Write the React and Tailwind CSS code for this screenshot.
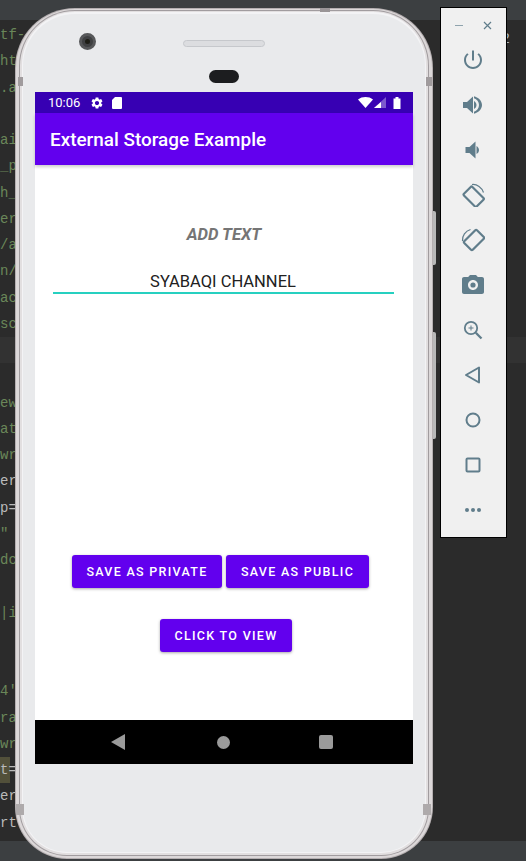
import React from 'react';

const codeRows = [
  ['tf-', 'text-[#6a8759]'], ['ht', 'text-[#6a8759]'], ['.a', 'text-[#6a8759]'], ['', ''],
  ['ai', 'text-[#6a8759]'], ['_p', 'text-[#6a8759]'], ['h_', 'text-[#6a8759]'], ['er', 'text-[#6a8759]'],
  ['/a', 'text-[#6a8759]'], ['n/', 'text-[#6a8759]'], ['ac', 'text-[#6a8759]'], ['sc', 'text-[#6a8759]'],
  ['', ''], ['', ''],
  ['ew', 'text-[#6a8759]'], ['at', 'text-[#6a8759]'], ['wr', 'text-[#6a8759]'], ['er', 'text-[#bababa]'],
  ['p=', 'text-[#bababa]'], ['"', 'text-[#6a8759]'], ['dc', 'text-[#6a8759]'], ['', ''],
  ['|i', 'text-[#6a8759]'], ['', ''], ['', ''],
  ["4'", 'text-[#6a8759]'], ['ra', 'text-[#6a8759]'], ['wr', 'text-[#6a8759]'], ['t=', 'text-[#bababa]'],
  ['er', 'text-[#bababa]'], ['rt', 'text-[#bababa]'],
];

const GEAR = 'M19.14 12.94c.04-.3.06-.61.06-.94 0-.32-.02-.64-.07-.94l2.03-1.58c.18-.14.23-.41.12-.61l-1.92-3.32c-.12-.22-.37-.29-.59-.22l-2.39.96c-.5-.38-1.03-.7-1.62-.94l-.36-2.54c-.04-.24-.24-.41-.48-.41h-3.84c-.24 0-.43.17-.47.41l-.36 2.54c-.59.24-1.13.57-1.62.94l-2.39-.96c-.22-.08-.47 0-.59.22L2.74 8.87c-.12.21-.08.47.12.61l2.03 1.58c-.05.3-.09.63-.09.94s.02.64.07.94l-2.03 1.58c-.18.14-.23.41-.12.61l1.92 3.32c.12.22.37.29.59.22l2.39-.96c.5.38 1.03.7 1.62.94l.36 2.54c.05.24.24.41.48.41h3.84c.24 0 .44-.17.47-.41l.36-2.54c.59-.24 1.13-.56 1.62-.94l2.39.96c.22.08.47 0 .59-.22l1.92-3.32c.12-.22.07-.47-.12-.61l-2.01-1.58zM12 15.6c-1.98 0-3.6-1.62-3.6-3.6s1.62-3.6 3.6-3.6 3.6 1.62 3.6 3.6-1.62 3.6-3.6 3.6z';

function ToolIcon({ children }) {
  return (
    <div className="h-[45px] flex items-center justify-center shrink-0 pr-[1px]">
      <svg width="24" height="24" viewBox="0 0 24 24" fill="#607d8b">{children}</svg>
    </div>
  );
}

function EmulatorToolbar() {
  return (
    <div className="absolute left-[440px] top-[7px] w-[67px] h-[531px] bg-[#f0f0f0] border border-black flex flex-col items-center">
      <div className="h-[29.500px] w-full flex items-start justify-center gap-[20px] shrink-0 pt-[13px]">
        <div className="mt-[4px] w-[8px] h-[1px] bg-[#8fa3ad]"></div>
        <svg width="9" height="9" viewBox="0 0 9 9" stroke="#607d8b" strokeWidth="1.2"><path d="M1 1l7 7M8 1l-7 7" /></svg>
      </div>
      {/* power */}
      <ToolIcon><path d="M13 2.5h-2v10h2v-10zm4.83 2.67l-1.42 1.42C17.99 7.86 19 9.81 19 12c0 3.87-3.13 7-7 7s-7-3.13-7-7c0-2.19 1.01-4.14 2.58-5.42L6.17 5.17C4.23 6.82 3 9.26 3 12c0 4.97 4.03 9 9 9s9-4.03 9-9c0-2.74-1.23-5.18-3.17-6.83z" /></ToolIcon>
      {/* volume up */}
      <ToolIcon><path d="M2 9v6h4l6 5.5v-17L6 9H2zm13.5 3c0-1.77-1.02-3.29-2.5-4.03v8.05c1.48-.73 2.5-2.25 2.5-4.02zM13 3.23v2.06c2.89.86 5 3.54 5 6.71s-2.11 5.85-5 6.71v2.06c4.01-.91 8-4.49 8-8.77s-3.99-7.86-8-8.77z" /></ToolIcon>
      {/* volume down */}
      <ToolIcon><path d="M18 12c0-1.77-1.02-3.29-2.5-4.03v8.05c1.48-.73 2.5-2.25 2.5-4.02zM4.5 9v6h4l6 5.5v-17L8.5 9h-4z" /></ToolIcon>
      {/* rotate left */}
      <ToolIcon>
        <g fill="none" stroke="#607d8b">
          <rect x="6" y="5" width="12" height="18" rx="1.2" strokeWidth="2.2" transform="rotate(-45 12 13)" />
          <path d="M11 1.500c5-.6 10 3 11.500 8" strokeWidth="1.2" />
        </g>
      </ToolIcon>
      {/* rotate right */}
      <ToolIcon>
        <g fill="none" stroke="#607d8b">
          <rect x="7" y="3" width="12" height="18" rx="1.2" strokeWidth="2.2" transform="rotate(45 13 12)" />
          <path d="M1.500 13c-.6-5 3-10 8-11.500" strokeWidth="1.2" />
        </g>
      </ToolIcon>
      {/* camera */}
      <ToolIcon><path fillRule="evenodd" d="M9 2L7.17 4H3c-1.100 0-2 .9-2 2v13c0 1.100.9 2 2 2h18c1.100 0 2-.9 2-2V6c0-1.100-.9-2-2-2h-4.170L15 2H9zm3 15c-2.760 0-5-2.240-5-5s2.240-5 5-5 5 2.240 5 5-2.240 5-5 5zm0-2.400a2.600 2.600 0 1 0 0-5.200 2.600 2.600 0 0 0 0 5.200z" /></ToolIcon>
      {/* zoom */}
      <ToolIcon>
        <g fill="none" stroke="#607d8b">
          <circle cx="10" cy="10" r="6.200" strokeWidth="1.800" />
          <path d="M14.800 14.800l5.700 5.700" strokeWidth="2.300" />
          <path d="M10 7.500v5M7.500 10h5" strokeWidth="1" />
        </g>
      </ToolIcon>
      {/* back */}
      <ToolIcon><path fill="none" stroke="#607d8b" strokeWidth="2" strokeLinejoin="round" d="M18 4.500v15L5 12z" /></ToolIcon>
      {/* home */}
      <ToolIcon><circle cx="12" cy="12" r="6.500" fill="none" stroke="#607d8b" strokeWidth="2" /></ToolIcon>
      {/* overview */}
      <ToolIcon><rect x="5.500" y="5.500" width="13" height="13" rx="1" fill="none" stroke="#607d8b" strokeWidth="2" /></ToolIcon>
      {/* more */}
      <ToolIcon>
        <circle cx="6" cy="12" r="2" />
        <circle cx="12" cy="12" r="2" />
        <circle cx="18" cy="12" r="2" />
      </ToolIcon>
    </div>
  );
}

function StatusBar() {
  return (
    <div className="h-[21px] bg-[#3700b3] flex items-center pl-[13px] pr-[12px] text-white shrink-0">
      <span className="text-[13px] font-['Roboto',sans-serif] leading-none">10:06</span>
      <svg className="ml-[10px]" width="14" height="14" viewBox="0 0 24 24" fill="#fff"><path d={GEAR} /></svg>
      <svg className="ml-[7px]" width="12" height="12" viewBox="0 0 12 12" fill="#fff"><path d="M4 0h6a1 1 0 0 1 1 1v10a1 1 0 0 1-1 1H2a1 1 0 0 1-1-1V3z" /></svg>
      <div className="ml-auto flex items-center">
        <svg width="15" height="11" viewBox="0 0 15 11" fill="#fff"><path d="M0 2.500C4-.8 11-.8 15 2.500L7.500 11z" /></svg>
        <svg className="ml-[1px]" width="12" height="11" viewBox="0 0 12 11"><path d="M12 0v11H0z" fill="#ffffff" fillOpacity="0.35" /><path d="M7 5v6H0z" fill="#fff" /></svg>
        <svg className="ml-[7px]" width="8" height="12" viewBox="0 0 8 12" fill="#fff"><path d="M2.500 0h3v1.500H7.500V12H.5V1.500h2z" /></svg>
      </div>
    </div>
  );
}

function AppButton({ children, className }) {
  return (
    <button className={`h-[33px] pt-[1px] rounded-[3px] bg-[#6200ee] text-white text-[12.500px] font-medium tracking-[1.300px] font-['Roboto',sans-serif] shadow-[0_1px_3px_rgba(0,0,0,0.35)] ${className}`}>
      {children}
    </button>
  );
}

function Screen() {
  return (
    <div className="w-[378px] h-[672px] flex flex-col">
      <StatusBar />
      <div className="h-[52px] bg-[#6200ee] flex items-center pl-[15px] pt-[2px] text-white text-[18.900px] font-medium font-['Roboto',sans-serif] shadow-[0_2px_3px_rgba(0,0,0,0.2)] shrink-0 z-10">
        External Storage Example
      </div>
      <div className="flex-1 bg-white flex flex-col items-center font-['Roboto',sans-serif]">
        <div className="mt-[60px] h-[20px] leading-[20px] text-[16.600px] font-bold italic text-[#757575]">ADD TEXT</div>
        <div className="mt-[27px] mr-[2px] w-[341px] h-[22px] border-b-2 border-[#26d0c0] text-center text-[16.500px] leading-[20px] text-[#212121]">SYABAQI CHANNEL</div>
        <div className="mt-[261px] flex gap-[4px] pr-[7px]">
          <AppButton className="w-[150px]">SAVE AS PRIVATE</AppButton>
          <AppButton className="w-[143px]">SAVE AS PUBLIC</AppButton>
        </div>
        <AppButton className="mt-[31px] ml-[4px] w-[132px]">CLICK TO VIEW</AppButton>
      </div>
      <div className="h-[44px] bg-black flex items-center justify-start shrink-0 pl-[76px]">
        <svg width="14" height="16" viewBox="0 0 14 16" fill="#9a9a9a"><path d="M14 0v16L0 8z" /></svg>
        <div className="ml-[92px] w-[13px] h-[13px] rounded-full bg-[#9a9a9a]"></div>
        <div className="ml-[89px] w-[14px] h-[14px] rounded-[2px] bg-[#9a9a9a]"></div>
      </div>
    </div>
  );
}

function Phone() {
  return (
    <div className="absolute left-[15px] top-[8px] w-[418px] h-[851px] rounded-t-[60px] rounded-b-[52px] bg-[#b5afb1] p-[1px]">
      {/* volume and power keys on the right edge */}
      <div className="absolute right-[-3px] top-[203px] w-[3px] h-[54px] bg-[#b9b9b9] rounded-r-[2px]"></div>
      <div className="absolute right-[-3px] top-[324px] w-[3px] h-[107px] bg-[#b9b9b9] rounded-r-[2px]"></div>

      <div className="w-full h-full rounded-t-[59px] rounded-b-[51px] bg-[#dcd8d9] pt-[1px] px-[3px] pb-[2px]">
        <div className="w-full h-full rounded-t-[56px] rounded-b-[48px] bg-[#a19c9f] pt-[1px] px-[1px] pb-[1px]">
          <div className="w-full h-full rounded-t-[55px] rounded-b-[47px] bg-[#e2dfe0] pt-[1px] px-[2px] pb-[2px]">
            <div className="w-full h-full rounded-t-[53px] rounded-b-[45px] bg-[#f3f3f5] p-[1px] pt-[2px]">
              <div className="w-full h-full rounded-t-[52px] rounded-b-[44px] bg-[#e9eaec] flex flex-col items-center">
                <div className="w-full h-[78px] relative shrink-0">
                  {/* front camera */}
                  <div className="absolute left-[56px] top-[19px] w-[17px] h-[17px] rounded-full bg-[#3f4042] border-[3px] border-[#57585a] flex items-center justify-center">
                    <div className="w-[5px] h-[5px] rounded-full bg-[#1d1d16]"></div>
                  </div>
                  {/* earpiece */}
                  <div className="absolute left-[160px] top-[26px] w-[82px] h-[7px] rounded-full bg-[#dcdde0] border border-[#c6c8cc]"></div>
                  {/* sensor */}
                  <div className="absolute left-[186px] top-[56px] w-[30px] h-[13px] rounded-full bg-[#1c1d1f]"></div>
                </div>
                <Screen />
              </div>
            </div>
          </div>
        </div>
      </div>

      {/* antenna bands */}
      <div className="absolute left-[3px] top-[69px] w-[5px] h-[9px] bg-[#a09b9d]"></div>
      <div className="absolute right-[1px] top-[69px] w-[6px] h-[9px] bg-[#a09b9d]"></div>
      <div className="absolute left-[1px] top-[796px] w-[8px] h-[11px] bg-[#aeaaab]"></div>
      <div className="absolute right-[2px] top-[796px] w-[8px] h-[11px] bg-[#aeaaab]"></div>
      <div className="absolute right-[103px] top-0 w-[10px] h-[4px] bg-[#9a9597]"></div>
    </div>
  );
}

export default function App() {
  return (
    <div className="relative w-[526px] h-[861px] overflow-hidden bg-[#2b2b2b] flex flex-col font-['Liberation_Mono',monospace]">
      <div className="h-[20px] bg-[#3c3f41] shrink-0"></div>
      <div className="relative flex-1 overflow-hidden">
        <div className="pt-[2px] text-[14px] leading-[26.250px]">
          {codeRows.map(([text, color], i) => (
            <div key={i} className={`h-[26.250px] ${i === 12 ? 'bg-[#323232]' : ''} ${i === 28 ? 'w-[10px] bg-[#52503a]' : ''} ${color}`}>{text}</div>
          ))}
        </div>
        <div className="absolute right-[16px] top-[7px] text-[15px] leading-[26px] text-[#a9b7c6]">2</div>
      </div>
      <div className="h-[20px] bg-[#3c3f41] shrink-0"></div>
      <Phone />
      <EmulatorToolbar />
    </div>
  );
}
